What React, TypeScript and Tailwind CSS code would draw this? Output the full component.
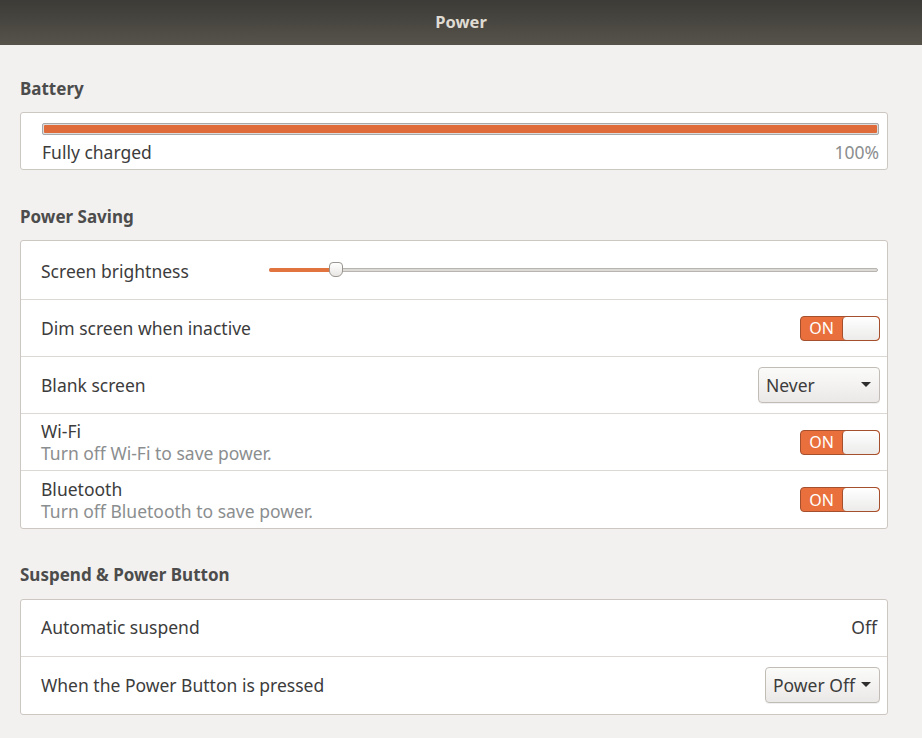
const font = { fontFamily: '"Noto Sans", "Open Sans", sans-serif' };

function Toggle() {
  return (
    <div className="flex h-[25px] w-[80px] overflow-hidden rounded-[4px] border border-[#a4502f] bg-[#e9703c]">
      <span className="flex w-[41px] items-center justify-center text-[16px] text-white">ON</span>
      <span className="flex-1 rounded-[4px] border-l border-[#a4502f] bg-gradient-to-b from-[#ffffff] to-[#ecebea]" />
    </div>
  );
}

function Dropdown({ label, width }: { label: string; width: string }) {
  return (
    <div
      className={`flex h-[36px] ${width} items-center justify-between rounded-[4px] border border-[#c2bcb7] bg-gradient-to-b from-[#fbfbfa] to-[#ebe9e7] px-[7px] text-[#3c3c3c] shadow-[0_1px_0_rgba(0,0,0,0.06)]`}
    >
      <span className="text-[17.5px]">{label}</span>
      <svg width="10" height="6" viewBox="0 0 10 6" className="mr-[1px]">
        <path d="M0 0 L10 0 L5 5 Z" fill="#2e2e2e" />
      </svg>
    </div>
  );
}

function Row({ children, last, tall }: { children: React.ReactNode; last?: boolean; tall?: boolean }) {
  return (
    <div
      className={`flex ${tall ? "h-[59px]" : "h-[57px]"} items-center justify-between pl-[20px] pr-[7px] ${last ? "" : "border-b border-[#dcd8d4]"}`}
    >
      {children}
    </div>
  );
}

function Heading({ children }: { children: React.ReactNode }) {
  return <h2 className="pl-[20px] text-[17px] font-bold text-[#4c4c4c]">{children}</h2>;
}

export default function App() {
  return (
    <div className="h-[738px] w-[922px] overflow-hidden bg-[#f2f1f0] text-[17.5px] text-[#3c3c3c]" style={font}>
      <div className="flex h-[45px] items-center justify-center bg-gradient-to-b from-[#3c3b37] to-[#56534b]">
        <span className="text-[16.5px] font-bold text-[#dfdbd2]">Power</span>
      </div>

      <div className="pt-[31px]">
        <Heading>Battery</Heading>
        <div className="ml-[20px] mt-[10px] h-[58px] w-[868px] rounded-[3px] border border-[#cdc7c2] bg-white pl-[21px] pr-[8px] pt-[10px]">
          <div className="h-[12px] rounded-[2px] border border-[#a8a8a8] bg-[#dcdcdc] p-[1px]">
            <div className="h-full w-full rounded-[1px] bg-[#df6b3b]" />
          </div>
          <div className="flex items-center justify-between leading-[34px]">
            <span>Fully charged</span>
            <span className="text-[#8b8e8f]">100%</span>
          </div>
        </div>

        <div className="mt-[34px]">
          <Heading>Power Saving</Heading>
          <div className="ml-[20px] mt-[11px] w-[868px] rounded-[3px] border border-[#cdc7c2] bg-white">
            <Row tall>
              <span className="pt-[2px]">Screen brightness</span>
              <div className="relative mr-[2px] flex h-[20px] w-[609px] items-center">
                <div className="h-[4px] w-full rounded-full border border-[#b8b4b0] bg-[#dcdad7]" />
                <div className="absolute left-0 h-[4px] w-[62px] rounded-full bg-[#e2743f]" />
                <div className="absolute left-[60px] top-[2px] h-[15px] w-[14px] rounded-b-[6px] rounded-t-[4px] border border-[#9a9590] bg-gradient-to-b from-white to-[#e9e7e4]" />
              </div>
            </Row>
            <Row>
              <span>Dim screen when inactive</span>
              <Toggle />
            </Row>
            <Row>
              <span>Blank screen</span>
              <Dropdown label="Never" width="w-[122px]" />
            </Row>
            <Row>
              <div className="flex flex-col leading-[22px]">
                <span>Wi-Fi</span>
                <span className="text-[#8b8e8f]">Turn off Wi-Fi to save power.</span>
              </div>
              <Toggle />
            </Row>
            <Row last>
              <div className="flex flex-col leading-[22px]">
                <span>Bluetooth</span>
                <span className="text-[#8b8e8f]">Turn off Bluetooth to save power.</span>
              </div>
              <Toggle />
            </Row>
          </div>
        </div>

        <div className="mt-[33px]">
          <Heading>Suspend &amp; Power Button</Heading>
          <div className="ml-[20px] mt-[11px] w-[868px] rounded-[3px] border border-[#cdc7c2] bg-white">
            <Row>
              <span>Automatic suspend</span>
              <span className="pr-[3px]">Off</span>
            </Row>
            <Row last>
              <span>When the Power Button is pressed</span>
              <Dropdown label="Power Off" width="w-[115px]" />
            </Row>
          </div>
        </div>
      </div>
    </div>
  );
}
